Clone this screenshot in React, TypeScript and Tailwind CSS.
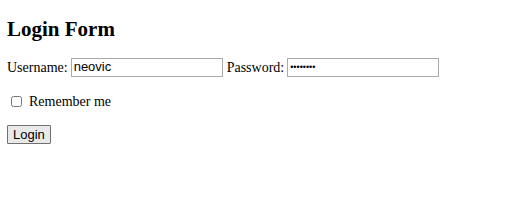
export default function App() {
  return (
    <div className="bg-white min-h-[219px] px-[7px] pt-[17px] text-[14px] text-black" style={{ fontFamily: '"Liberation Serif", serif' }}>
      <h2 className="text-[21px] font-bold leading-[24px]">Login Form</h2>
      <div className="mt-[16px] flex items-center h-[20px]">
        <span>Username:</span>
        <input
          type="text"
          defaultValue="neovic"
          className="ml-[3px] w-[152px] h-[19px] border border-[#a9a9a9] px-[2px] text-[13px] outline-none"
          style={{ fontFamily: '"Liberation Sans", sans-serif' }}
        />
        <span className="ml-[4px]">Password:</span>
        <input
          type="password"
          defaultValue="password"
          className="ml-[3px] w-[152px] h-[19px] border border-[#a9a9a9] px-[2px] text-[9px] outline-none"
          style={{ fontFamily: '"Liberation Sans", sans-serif' }}
        />
      </div>
      <label className="mt-[14px] flex items-center h-[20px]">
        <input type="checkbox" className="ml-[4px] w-[11px] h-[11px] m-0 accent-[#a0a0a0]" />
        <span className="ml-[7px]">Remember me</span>
      </label>
      <button
        className="mt-[14px] h-[19px] px-[5px] border border-[#707070] bg-[#e9e9e9] text-[13px] leading-none rounded-[1px]"
        style={{ fontFamily: '"Liberation Sans", sans-serif' }}
      >
        Login
      </button>
    </div>
  );
}
